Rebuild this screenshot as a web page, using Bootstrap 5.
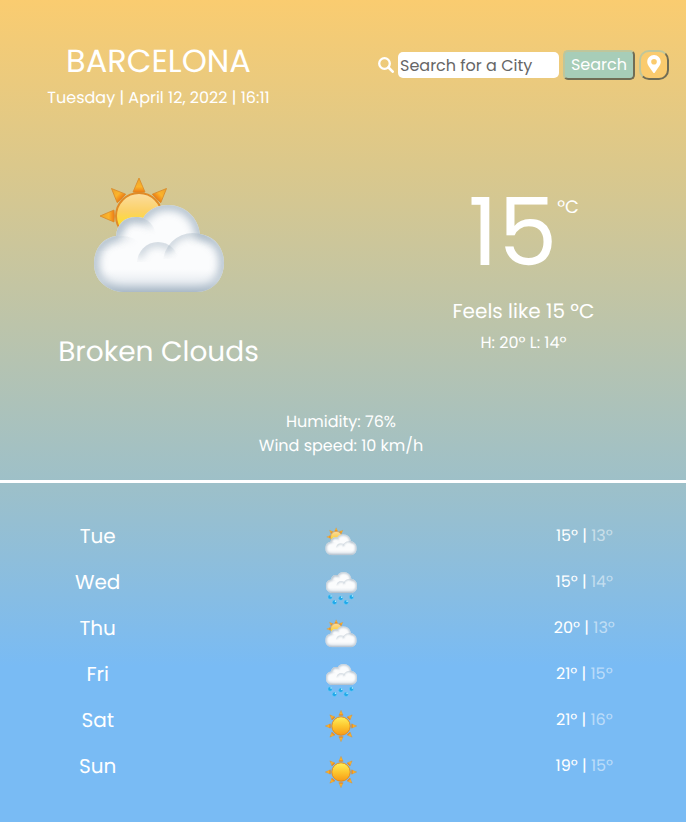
<!DOCTYPE html>
<html lang="en">
<head>
<meta charset="utf-8">
<meta name="viewport" content="width=device-width, initial-scale=1">
<title>Weather in Barcelona</title>
<link href="https://cdn.jsdelivr.net/npm/bootstrap@5.3.0/dist/css/bootstrap.min.css" rel="stylesheet">
<style>
  body { font-family: Poppins, Inter, sans-serif; font-size: 16px; line-height: 24px; color: #fff; min-height: 100vh; overflow-x: hidden; text-rendering: geometricPrecision;
    background: linear-gradient(180deg, #facc70 0%, #dbc88b 20%, #9dc0c9 59%, #79bbf4 81%, #79bbf4 100%) no-repeat; }
  .weather { margin: 0 -20px 0 -24px; }
  .city { font-size: 32px; line-height: 40px; font-weight: 400; }
  .top-row { padding-top: 42px; height: 134px; }
  .search-icon { width: 16px; height: 16px; }
  .search-box { width: 161px; height: 26px; padding: 0 2px; border: 0; border-radius: 5px; color: #666; background: #fff; }
  .search-box::placeholder { color: #666; opacity: 1; }
  .search-btn, .pin-btn { height: 30px; border: 2px solid; border-color: #bfc69b #706d55 #706d55 #bfc69b; color: #fff; padding: 0; }
  .search-btn { width: 72px; border-radius: 5px; background: #a7cdb8; }
  .pin-btn { width: 30px; border-radius: 10px; background: #facb6e; }
  .pin-btn svg { width: 14px; height: 18px; margin-bottom: 3px; }
  .sky { width: 132px; height: 120px; margin-top: 43px; }
  .summary { font-size: 28px; line-height: 36px; margin-top: 37px; }
  .now { font-size: 94px; line-height: 96px; margin-top: 50px; }
  .unit { font-size: 18px; line-height: 24px; margin-top: 12px; }
  .feels { font-size: 20px; line-height: 28px; margin-top: 17px; }
  .range { margin-top: 6px; }
  .details { margin-top: 40px; padding-bottom: 22px; }
  .divider { height: 3px; background: #fff; }
  .forecast { padding-top: 29px; }
  .day { height: 46px; }
  .day-name { font-size: 20px; }
  .low { color: rgba(255,255,255,.5); }
  .day-icon { width: 32px; height: 34px; margin-top: 13px; }
</style>
<script src="https://cdn.jsdelivr.net/npm/bootstrap@5.3.0/dist/js/bootstrap.bundle.min.js"></script>
</head>
<body>
<svg width="0" height="0" class="position-absolute" aria-hidden="true">
  <defs>
    <linearGradient id="sunFill" x1="0" y1="0" x2="0" y2="1"><stop offset="0" stop-color="#fbdda0"/><stop offset=".4" stop-color="#fbd166"/><stop offset=".75" stop-color="#ffe11f"/></linearGradient>
    <linearGradient id="discFill" x1="0" y1="0" x2="0" y2="1"><stop offset="0" stop-color="#fff05d"/><stop offset=".5" stop-color="#fdc72f"/><stop offset="1" stop-color="#f79a16"/></linearGradient>
    <linearGradient id="rayFill" x1="0" y1="0" x2="1" y2="0"><stop offset="0" stop-color="#eda22c"/><stop offset=".6" stop-color="#fbb42b"/><stop offset="1" stop-color="#ec7a14"/></linearGradient>
    <linearGradient id="base" x1="0" y1="0" x2="0" y2="1"><stop offset="0" stop-color="#dfe5ec" stop-opacity="0"/><stop offset=".5" stop-color="#d0d9e2" stop-opacity=".6"/><stop offset="1" stop-color="#9aacbd"/></linearGradient>
    <filter id="soft" x="-30%" y="-30%" width="160%" height="160%"><feGaussianBlur stdDeviation="4"/></filter>
    <clipPath id="cloudClip"><path id="outline" d="M30 115C14 114 1 103 1 87C1 71 10 61 23 59C24 47 31 40 43 40C46 40 48 40 50 41C56 32 64 28 75 28C92 28 105 40 107 57C121 59 131 70 131 86C131 102 120 115 103 115Z"/></clipPath>
    <clipPath id="smallPuff"><circle cx="43" cy="60" r="20"/></clipPath>
    <clipPath id="midPuff"><circle cx="65" cy="86" r="21"/></clipPath>
    <clipPath id="leftPuff"><circle cx="29" cy="88" r="29"/></clipPath>
    <clipPath id="rightPuff"><circle cx="100" cy="86" r="30"/></clipPath>
    <g id="cloud">
      <g clip-path="url(#cloudClip)">
        <rect width="132" height="120" fill="#fbfcfd"/>
        <use href="#outline" fill="none" stroke="#9fb0c0" stroke-width="9" opacity=".85" filter="url(#soft)"/>
        <g fill="none" stroke="#a8b7c5" stroke-width="6">
          <g clip-path="url(#smallPuff)" opacity=".6"><path d="M25 56Q29 40 43 40Q54 40 59 49" filter="url(#soft)"/></g>
          <g clip-path="url(#midPuff)" opacity=".85"><path d="M45 80Q50 65 65 65Q73 65 80 71" filter="url(#soft)"/></g>
          <g clip-path="url(#leftPuff)"><path d="M5 70Q20 57 38 60" opacity=".3" filter="url(#soft)"/></g>
          <g clip-path="url(#rightPuff)" opacity=".85"><path d="M72 76Q78 56 100 56Q111 56 119 62" filter="url(#soft)"/></g>
        </g>
        <rect y="92" width="132" height="24" fill="url(#base)" opacity=".7"/>
      </g>
    </g>
    <g id="ray"><path d="M0 0L14 -6Q15 0 14 6Z" fill="url(#rayFill)" stroke="#d98a28" stroke-width=".8"/></g>
    <symbol id="partly" viewBox="0 0 132 120">
      <circle cx="46" cy="39" r="23" fill="url(#sunFill)" stroke="#e08b27" stroke-width="2"/>
      <use href="#ray" transform="translate(7 39)"/>
      <use href="#ray" transform="translate(18.500 11.500) rotate(45)"/>
      <use href="#ray" transform="translate(46 1) rotate(90)"/>
      <use href="#ray" transform="translate(73.500 11.500) rotate(135)"/>
      <use href="#cloud"/>
    </symbol>
    <symbol id="rain" viewBox="0 0 132 138">
      <use href="#cloud" transform="translate(2 -25)"/>
      <g fill="#20a8ea" stroke="#6fd2f8" stroke-width="2"><circle cx="21" cy="106" r="9"/><circle cx="65" cy="111" r="9"/><circle cx="109" cy="106" r="9"/><circle cx="39" cy="128" r="9"/><circle cx="87" cy="128" r="9"/></g>
      <g fill="#c6f2ff"><circle cx="25" cy="102" r="3"/><circle cx="69" cy="107" r="3"/><circle cx="113" cy="102" r="3"/><circle cx="43" cy="124" r="3"/><circle cx="91" cy="124" r="3"/></g>
    </symbol>
    <symbol id="sunny" viewBox="0 0 132 132">
      <g id="rays"><use href="#ray" transform="translate(1 66) scale(1.500)"/><use href="#ray" transform="translate(131 66) rotate(180) scale(1.500)"/><use href="#ray" transform="translate(66 1) rotate(90) scale(1.500)"/><use href="#ray" transform="translate(66 131) rotate(270) scale(1.500)"/></g>
      <use href="#rays" transform="rotate(45 66 66)"/>
      <circle cx="66" cy="66" r="38" fill="url(#discFill)" stroke="#e58a1b" stroke-width="4"/>
    </symbol>
  </defs>
</svg>

<main class="weather text-center">
  <header class="row g-0 top-row">
    <div class="col-6">
      <h1 class="city text-uppercase mb-1">Barcelona</h1>
      <div>Tuesday | April 12, 2022 | 16:11</div>
    </div>
    <form class="col-6 d-flex justify-content-center align-items-center gap-1 align-self-start pt-2" onsubmit="return false">
      <label for="city" class="d-flex" aria-label="City"><svg class="search-icon" viewBox="0 0 16 16" fill="none" stroke="#fff"><circle cx="6.500" cy="6.500" r="5.300" stroke-width="2.300"/><path d="M10.500 10.500L14.700 14.700" stroke-width="2.600" stroke-linecap="round"/></svg></label>
      <input id="city" class="search-box" type="text" placeholder="Search for a City">
      <button class="search-btn" type="submit">Search</button>
      <button class="pin-btn" type="button" aria-label="Use my location"><svg viewBox="0 0 384 512" fill="#fff"><path fill-rule="evenodd" d="M172 502C27 291 0 270 0 192C0 86 86 0 192 0S384 86 384 192C384 270 357 291 212 502C202 515 182 515 172 502ZM192 272A80 80 0 1 0 192 112A80 80 0 0 0 192 272Z"/></svg></button>
    </form>
  </header>

  <section class="row g-0">
    <div class="col-6">
      <svg class="sky overflow-visible" role="img" aria-label="Sun behind clouds"><use href="#partly"/></svg>
      <div class="summary">Broken Clouds</div>
    </div>
    <div class="col-6">
      <div class="d-flex justify-content-center align-items-start">
        <div class="now">15</div><div class="now"><div class="unit">ºC</div></div>
      </div>
      <div class="feels">Feels like 15 ºC</div>
      <div class="range">H: 20º L: 14º</div>
    </div>
  </section>

  <section class="details">
    <div>Humidity: 76%</div>
    <div>Wind speed: 10 km/h</div>
  </section>
  <div class="divider"></div>

  <section class="forecast">
    <div class="row g-0 day align-items-center"><div class="col-4 day-name">Tue</div><div class="col-4"><svg class="day-icon"><use href="#partly"/></svg></div><div class="col-4">15º | <span class="low">13º</span></div></div>
    <div class="row g-0 day align-items-center"><div class="col-4 day-name">Wed</div><div class="col-4"><svg class="day-icon"><use href="#rain"/></svg></div><div class="col-4">15º | <span class="low">14º</span></div></div>
    <div class="row g-0 day align-items-center"><div class="col-4 day-name">Thu</div><div class="col-4"><svg class="day-icon"><use href="#partly"/></svg></div><div class="col-4">20º | <span class="low">13º</span></div></div>
    <div class="row g-0 day align-items-center"><div class="col-4 day-name">Fri</div><div class="col-4"><svg class="day-icon"><use href="#rain"/></svg></div><div class="col-4">21º | <span class="low">15º</span></div></div>
    <div class="row g-0 day align-items-center"><div class="col-4 day-name">Sat</div><div class="col-4"><svg class="day-icon"><use href="#sunny"/></svg></div><div class="col-4">21º | <span class="low">16º</span></div></div>
    <div class="row g-0 day align-items-center"><div class="col-4 day-name">Sun</div><div class="col-4"><svg class="day-icon"><use href="#sunny"/></svg></div><div class="col-4">19º | <span class="low">15º</span></div></div>
  </section>
</main>
</body>
</html>
